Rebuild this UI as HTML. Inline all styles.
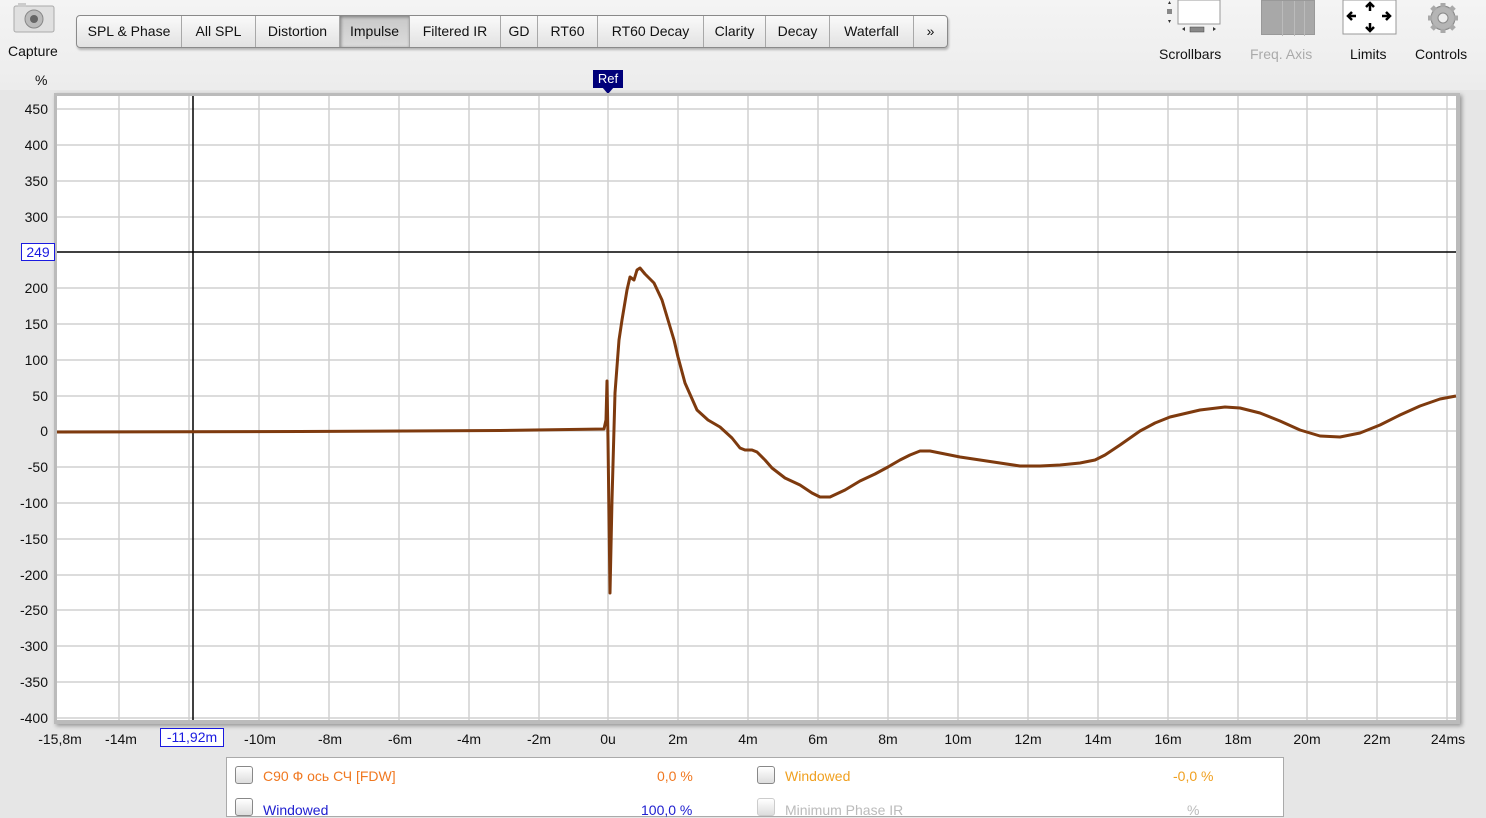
<!DOCTYPE html>
<html><head><meta charset="utf-8"><style>
*{margin:0;padding:0;box-sizing:border-box}
body{width:1486px;height:806px;overflow:hidden;background:#e6e6e6;font-family:"Liberation Sans","Noto Sans CJK SC",sans-serif;position:relative;color:#111}
.top{position:absolute;left:0;top:0;width:1486px;height:90px;background:linear-gradient(#f4f4f4,#ececec)}
.t{position:absolute;font-size:14px;white-space:nowrap}
.tabs{position:absolute;left:76px;top:15px;height:33px;width:872px;border:1px solid #8a8a8a;border-radius:4px;background:linear-gradient(#fafafa,#e2e2e2);display:flex;box-shadow:1px 2px 2px rgba(0,0,0,.25)}
.tabs div{height:31px;line-height:31px;font-size:14px;text-align:center;border-right:1px solid #a8a8a8;color:#111}
.tabs div.on{background:linear-gradient(#c8c8c8,#dcdcdc);box-shadow:inset 1px 1px 3px rgba(0,0,0,.4)}
.yl{position:absolute;right:1438px;font-size:14px;text-align:right;width:50px}
.xl{position:absolute;top:731px;font-size:14px;width:60px;text-align:center;margin-left:-30px}
.leg{position:absolute;left:226px;top:757px;width:1058px;height:60px;background:#fff;border:1px solid #aaa}
.cb{position:absolute;width:18px;height:18px;border:1px solid #888;border-radius:3px;background:linear-gradient(#fff,#ddd)}
</style></head><body>
<div class="top"></div>
<svg style="position:absolute;left:12px;top:2px" width="46" height="32"><rect x="2" y="4" width="40" height="26" rx="2" fill="#e0e0e0" stroke="#aaa"/><rect x="6" y="1" width="8" height="4" fill="#ccc"/><circle cx="22" cy="17" r="9" fill="#bbb" stroke="#888"/><circle cx="22" cy="17" r="4" fill="#666"/></svg>
<div class="t" style="left:8px;top:43px">Capture</div>
<div class="tabs">
<div style="width:105px">SPL &amp; Phase</div><div style="width:74px">All SPL</div><div style="width:84px">Distortion</div><div class="on" style="width:70px">Impulse</div><div style="width:91px">Filtered IR</div><div style="width:37px">GD</div><div style="width:60px">RT60</div><div style="width:106px">RT60 Decay</div><div style="width:62px">Clarity</div><div style="width:64px">Decay</div><div style="width:84px">Waterfall</div><div style="width:33px;border:none">»</div>
</div>
<svg style="position:absolute;left:1160px;top:0" width="70" height="36"><rect x="18" y="0" width="42" height="24" fill="#fff" stroke="#999"/><path d="M11 4l-3 0 1.5-3z M11 20l-3 0 1.5 3z" fill="#333"/><rect x="7" y="9" width="5" height="5" fill="#888"/><rect x="30" y="27" width="14" height="5" fill="#888" stroke="#444" stroke-width=".5"/><path d="M22 29l3-2v4z M56 29l-3-2v4z" fill="#333"/></svg>
<div class="t" style="left:1159px;top:46px">Scrollbars</div>
<div style="position:absolute;left:1261px;top:0;width:54px;height:35px;background:#a8a8a8;border:1px solid #999"><div style="position:absolute;left:20px;top:0;width:1px;height:35px;background:#bbb"></div><div style="position:absolute;left:32px;top:0;width:1px;height:35px;background:#bbb"></div><div style="position:absolute;left:42px;top:0;width:1px;height:35px;background:#bbb"></div></div>
<div class="t" style="left:1250px;top:46px;color:#aaa">Freq. Axis</div>
<svg style="position:absolute;left:1342px;top:0" width="56" height="36"><rect x="1" y="0" width="53" height="34" fill="#fff" stroke="#999"/><g stroke="#000" stroke-width="2.5" fill="none"><path d="M28 4v7M28 23v8M6 16h8M40 16h8"/><path d="M24 7l4-4 4 4M24 27l4 4 4-4M10 12l-4 4 4 4M44 12l4 4-4 4"/></g></svg>
<div class="t" style="left:1350px;top:46px">Limits</div>
<svg style="position:absolute;left:1425px;top:1px" width="36" height="34"><g fill="#a9a9a9" stroke="#888"><circle cx="18" cy="17" r="12"/></g><g stroke="#a9a9a9" stroke-width="5"><path d="M18 2v30M3 17h30M7 6l22 22M29 6L7 28"/></g><circle cx="18" cy="17" r="11" fill="#b5b5b5"/><circle cx="18" cy="17" r="5" fill="#eee" stroke="#888"/></svg>
<div class="t" style="left:1415px;top:46px">Controls</div>

<div class="t" style="left:35px;top:72px">%</div>
<div style="position:absolute;left:593px;top:70px;width:30px;height:18px;background:#00007a;color:#fff;font-size:13px;text-align:center;line-height:18px">Ref</div>
<div style="position:absolute;left:602px;top:87px;width:0;height:0;border-left:6px solid transparent;border-right:6px solid transparent;border-top:7px solid #00007a"></div>

<div style="position:absolute;left:54px;top:93px;width:1406px;height:631px;background:#bbb;box-shadow:2px 2px 4px rgba(0,0,0,.35)"></div>
<svg style="position:absolute;left:0;top:0" width="1486" height="806">
<rect x="57" y="96" width="1399" height="624" fill="#fff"/>
<g stroke="#d0d0d0" stroke-width="1.5">
<path d="M119 96V720M189 96V720M259 96V720M329 96V720M399 96V720M469 96V720M539 96V720M608 96V720M678 96V720M748 96V720M818 96V720M888 96V720M958 96V720M1028 96V720M1098 96V720M1168 96V720M1238 96V720M1307 96V720M1377 96V720M1447 96V720"/>
<path d="M57 109H1456M57 145H1456M57 181H1456M57 217H1456M57 288H1456M57 324H1456M57 360H1456M57 396H1456M57 431H1456M57 467H1456M57 503H1456M57 539H1456M57 575H1456M57 610H1456M57 646H1456M57 682H1456M57 718H1456"/>
</g>
<path d="M57 252H1456M193 96V720" stroke="#000" stroke-width="1.5"/>
<path d="M57 432 L300 431.5 L500 430.5 L604 429 L606 420 L607 381 L608 440 L610 593 L612 500 L615 393 L619 340 L622 320 L627 290 L630 277 L634 280 L637 270 L640 268 L645 274 L654 283 L662 300 L668 320 L674 340 L678 357 L685 383 L697 410 L708 420 L720 427 L732 438 L740 448 L745 450 L752 450 L757 452 L765 460 L772 468 L785 478 L800 485 L812 493 L820 497 L830 497 L845 490 L860 481 L875 474 L888 467 L900 460 L910 455 L920 451 L930 451 L945 454 L960 457 L980 460 L1000 463 L1020 466 L1040 466 L1060 465 L1080 463 L1095 460 L1105 455 L1120 445 L1140 431 L1155 423 L1170 417 L1200 410 L1225 407 L1240 408 L1260 413 L1280 421 L1300 430 L1320 436 L1340 437 L1360 433 L1380 425 L1400 415 L1420 406 L1440 399 L1456 396" fill="none" stroke="#7e3a0e" stroke-width="3" stroke-linejoin="round"/>
</svg>
<div class="yl" style="top:101px">450</div><div class="yl" style="top:137px">400</div><div class="yl" style="top:173px">350</div><div class="yl" style="top:209px">300</div>
<div style="position:absolute;left:21px;top:243px;width:34px;height:18px;border:1px solid #1a1ae0;background:#fff;color:#1a1ae0;font-size:14px;text-align:center;line-height:16px">249</div>
<div class="yl" style="top:280px">200</div><div class="yl" style="top:316px">150</div><div class="yl" style="top:352px">100</div><div class="yl" style="top:388px">50</div><div class="yl" style="top:423px">0</div><div class="yl" style="top:459px">-50</div><div class="yl" style="top:495px">-100</div><div class="yl" style="top:531px">-150</div><div class="yl" style="top:567px">-200</div><div class="yl" style="top:602px">-250</div><div class="yl" style="top:638px">-300</div><div class="yl" style="top:674px">-350</div><div class="yl" style="top:710px">-400</div>
<div class="xl" style="left:60px">-15,8m</div><div class="xl" style="left:121px">-14m</div>
<div style="position:absolute;left:160px;top:728px;width:64px;height:19px;border:1px solid #1a1ae0;background:#fff;color:#1a1ae0;font-size:14px;text-align:center;line-height:17px">-11,92m</div>
<div class="xl" style="left:260px">-10m</div><div class="xl" style="left:330px">-8m</div><div class="xl" style="left:400px">-6m</div><div class="xl" style="left:469px">-4m</div><div class="xl" style="left:539px">-2m</div><div class="xl" style="left:608px">0u</div><div class="xl" style="left:678px">2m</div><div class="xl" style="left:748px">4m</div><div class="xl" style="left:818px">6m</div><div class="xl" style="left:888px">8m</div><div class="xl" style="left:958px">10m</div><div class="xl" style="left:1028px">12m</div><div class="xl" style="left:1098px">14m</div><div class="xl" style="left:1168px">16m</div><div class="xl" style="left:1238px">18m</div><div class="xl" style="left:1307px">20m</div><div class="xl" style="left:1377px">22m</div><div class="xl" style="left:1448px">24ms</div>
<div class="leg">
<div class="cb" style="left:8px;top:8px"></div><div class="t" style="left:36px;top:10px;color:#f07820">C90 Ф ось СЧ [FDW]</div><div class="t" style="left:430px;top:10px;color:#f07820">0,0 %</div>
<div class="cb" style="left:530px;top:8px"></div><div class="t" style="left:558px;top:10px;color:#f0a020">Windowed</div><div class="t" style="left:946px;top:10px;color:#f0a020">-0,0 %</div>
<div class="cb" style="left:8px;top:40px"></div><div class="t" style="left:36px;top:44px;color:#2020d0">Windowed</div><div class="t" style="left:414px;top:44px;color:#2020d0">100,0 %</div>
<div class="cb" style="left:530px;top:40px;border-color:#ccc"></div><div class="t" style="left:558px;top:44px;color:#bbb">Minimum Phase IR</div><div class="t" style="left:960px;top:44px;color:#bbb">%</div>
</div>
</body></html>
